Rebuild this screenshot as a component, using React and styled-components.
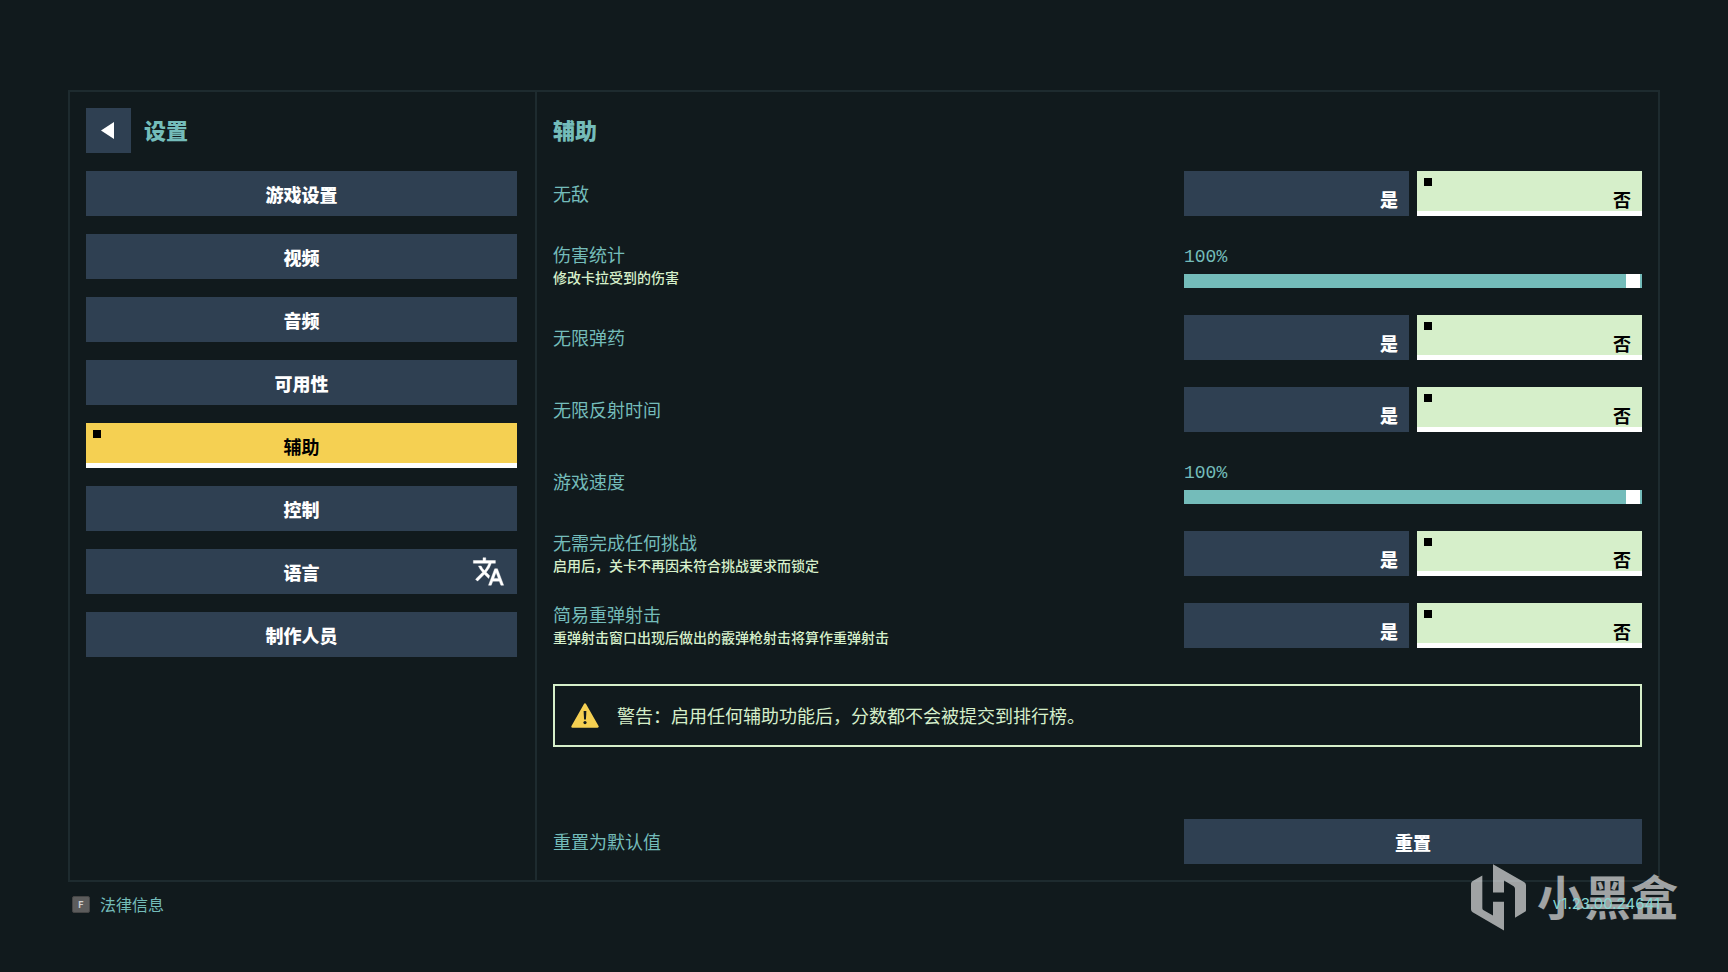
import React, { useState } from "react";
import styled, { createGlobalStyle, css, ThemeProvider } from "styled-components";

const theme = {
  bg: "#111a1d",
  line: "#1e2b2f",
  slate: "#2f4052",
  teal: "#74bcba",
  mint: "#d6efca",
  yellow: "#f5d052",
  white: "#ffffff",
  black: "#000000",
};

const GlobalStyle = createGlobalStyle`
  *, *::before, *::after { box-sizing: border-box; }
  body {
    margin: 0;
    background: ${theme.bg};
    color: ${theme.teal};
    font-family: "Noto Sans CJK SC", "Noto Sans", sans-serif;
    font-size: 18px;
    line-height: 24px;
  }
  button, input { font: inherit; margin: 0; }
`;

const Page = styled.div`
  position: relative;
  min-height: 100vh;
  display: flex;
  flex-direction: column;
  padding: 90px 68px 0;
`;

const Panel = styled.main`
  flex: 1;
  display: grid;
  grid-template-columns: minmax(240px, 467px) minmax(0, 1fr);
  border: 2px solid ${(p) => p.theme.line};
`;

const Sidebar = styled.aside`
  display: flex;
  flex-direction: column;
  gap: 18px;
  padding: 16px 18px 16px 16px;
  border-right: 2px solid ${(p) => p.theme.line};
`;

const Content = styled.section`
  display: flex;
  flex-direction: column;
  gap: 18px;
  padding: 16px;
`;

const Header = styled.header`
  display: flex;
  align-items: center;
  gap: 13px;
  height: 45px;
`;

const Title = styled.h1`
  margin: 0;
  padding-bottom: 4px;
  font-size: 22px;
  line-height: 32px;
  font-weight: 900;
`;

const buttonBase = css`
  border: 0;
  padding: 0;
  height: 45px;
  background: ${(p) => p.theme.slate};
  color: ${(p) => p.theme.white};
  font-weight: 900;
  cursor: pointer;
`;

const BackButton = styled.button`
  ${buttonBase}
  width: 45px;
  display: grid;
  place-items: center;
`;

const NavList = styled.nav`
  display: flex;
  flex-direction: column;
  gap: 18px;
`;

const NavButton = styled.button`
  ${buttonBase}
  width: 100%;
  display: grid;
  grid-template-columns: 1fr auto 1fr;
  align-items: center;
  padding: 0 7px;
  ${(p) =>
    p.$active &&
    css`
      background: ${p.theme.yellow};
      color: ${p.theme.black};
      font-weight: 700;
      box-shadow: inset 0 -5px ${p.theme.white};
    `}
`;

const Marker = styled.span`
  align-self: start;
  width: 8px;
  height: 8px;
  margin-top: 7px;
  background: ${(p) => (p.$on ? p.theme.black : "transparent")};
`;

const NavIcon = styled.span`
  display: flex;
  justify-self: end;
  padding-right: 5px;
`;

const Rows = styled.div`
  display: flex;
  flex-direction: column;
  gap: 27px;
`;

const Row = styled.div`
  display: grid;
  grid-template-columns: minmax(0, 1fr) minmax(200px, 458px);
  align-items: center;
  min-height: 45px;
`;

const RowText = styled.div`
  display: flex;
  flex-direction: column;
`;

const RowLabel = styled.span`
  padding-bottom: 2px;
  line-height: 22px;
`;

const RowHint = styled.span`
  color: ${(p) => p.theme.mint};
  font-size: 14px;
  line-height: 21px;
  font-weight: 500;
`;

const ToggleGroup = styled.div`
  display: grid;
  grid-template-columns: 1fr 1fr;
  gap: 8px;
`;

const ToggleOption = styled.label`
  display: flex;
  justify-content: space-between;
  height: 45px;
  padding: 7px 11px 0 7px;
  background: ${(p) => (p.$on ? p.theme.mint : p.theme.slate)};
  color: ${(p) => (p.$on ? p.theme.black : p.theme.white)};
  font-weight: ${(p) => (p.$on ? 700 : 900)};
  box-shadow: ${(p) => (p.$on ? `inset 0 -5px ${p.theme.white}` : "none")};
  cursor: pointer;
`;

const ToggleRadio = styled.input`
  appearance: none;
  width: 8px;
  height: 8px;
  background: transparent;
  &:checked { background: ${(p) => p.theme.black}; }
`;

const ToggleText = styled.span`
  height: 38px;
  line-height: 42px;
`;

const SliderBox = styled.div`
  display: flex;
  flex-direction: column;
  justify-content: space-between;
  height: 45px;
`;

const SliderValue = styled.output`
  padding-top: 2px;
  font-family: "Liberation Mono", monospace;
  line-height: 24px;
`;

const Slider = styled.input`
  appearance: none;
  display: block;
  width: 100%;
  height: 14px;
  padding: 0 2px;
  background: ${(p) => p.theme.teal};
  cursor: pointer;
  &::-webkit-slider-thumb {
    appearance: none;
    width: 14px;
    height: 14px;
    background: ${(p) => p.theme.white};
  }
`;

const Warning = styled.p`
  display: flex;
  align-items: center;
  gap: 18px;
  min-height: 63px;
  margin: 18px 0 0;
  padding: 0 16px;
  border: 2px solid ${(p) => p.theme.mint};
  color: ${(p) => p.theme.mint};
`;

const ResetRow = styled(Row)`
  margin-top: auto;
`;

const ResetButton = styled.button`
  ${buttonBase}
  width: 100%;
`;

const Footer = styled.footer`
  display: flex;
  justify-content: space-between;
  align-items: flex-start;
  height: 90px;
  padding-top: 10px;
`;

const Legal = styled.a`
  display: flex;
  align-items: center;
  gap: 10px;
  padding-left: 4px;
  color: ${(p) => p.theme.teal};
  font-size: 16px;
  text-decoration: none;
`;

const Key = styled.kbd`
  width: 18px;
  height: 17px;
  border: 1px solid #454545;
  border-radius: 2px;
  background: #5c5c5c;
  color: #d0d0d0;
  font: 700 9px/15px Inter, sans-serif;
  text-align: center;
`;

const Version = styled.span`
  position: relative;
  z-index: 1;
  color: #86d6d2;
  font-family: Inter, sans-serif;
  font-size: 15px;
`;

const Watermark = styled.div`
  position: absolute;
  right: 50px;
  bottom: 41px;
  display: flex;
  align-items: flex-start;
  gap: 11px;
  color: ${(p) => p.theme.white};
  font-size: 47px;
  line-height: 62px;
  font-weight: 700;
  opacity: 0.6;
  pointer-events: none;
`;

const TranslateIcon = () => (
  <svg width="33" height="33" viewBox="0 0 24 24" fill="currentColor" aria-hidden="true">
    <path d="M12.87 15.07l-2.54-2.51.03-.03A17.52 17.52 0 0014.07 6H17V4h-7V2H8v2H1v1.99h11.17C11.5 7.92 10.44 9.75 9 11.35 8.07 10.32 7.3 9.19 6.69 8h-2c.73 1.63 1.73 3.17 2.98 4.56l-5.09 5.02L4 19l5-5 3.11 3.11.76-2.04zM18.5 10h-2L12 22h2l1.12-3h4.75L21 22h2l-4.5-12zm-2.62 7l1.62-4.33L19.12 17h-3.24z" stroke="currentColor" strokeWidth="0.3" />
  </svg>
);

const BackIcon = () => (
  <svg width="15" height="17" viewBox="0 0 15 17" fill="currentColor" aria-hidden="true">
    <path d="M13 0v17L0 8.5z" />
  </svg>
);

const WarningIcon = () => (
  <svg width="28" height="25" viewBox="0 0 28 25" aria-hidden="true">
    <path d="M14 1.5L26.5 23.5H1.5z" fill={theme.yellow} stroke={theme.yellow} strokeWidth="2.4" strokeLinejoin="round" />
    <path d="M12.6 8h2.8l-.5 8.4h-1.8z" fill={theme.bg} />
    <circle cx="14" cy="19.6" r="1.6" fill={theme.bg} />
  </svg>
);

const HeyboxLogo = () => (
  <svg width="55" height="67" viewBox="48 44 165 200" fill="currentColor" aria-hidden="true">
    <path d="M82 78v98q0 4 4 6l28 16v-41h33v86l-94-55q-5-3-5-9v-76q0-5 4-8z" />
    <path d="M114 44l94 54q5 3 5 9v75q0 3-3 5l-30 18v-87q0-5-4-8l-29-17v36h-33z" />
  </svg>
);

const sections = ["游戏设置", "视频", "音频", "可用性", "辅助", "控制", "语言", "制作人员"];

const options = [
  { id: "invincible", label: "无敌", kind: "toggle" },
  { id: "damage", label: "伤害统计", hint: "修改卡拉受到的伤害", kind: "slider" },
  { id: "ammo", label: "无限弹药", kind: "toggle" },
  { id: "reflex", label: "无限反射时间", kind: "toggle" },
  { id: "speed", label: "游戏速度", kind: "slider" },
  { id: "challenges", label: "无需完成任何挑战", hint: "启用后，关卡不再因未符合挑战要求而锁定", kind: "toggle" },
  { id: "ricochet", label: "简易重弹射击", hint: "重弹射击窗口出现后做出的霰弹枪射击将算作重弹射击", kind: "toggle" },
];

function Toggle({ id }) {
  const [value, setValue] = useState("否");
  return (
    <ToggleGroup role="radiogroup" aria-labelledby={`${id}-label`}>
      {["是", "否"].map((text) => (
        <ToggleOption key={text} $on={value === text}>
          <ToggleRadio type="radio" name={id} checked={value === text} onChange={() => setValue(text)} />
          <ToggleText>{text}</ToggleText>
        </ToggleOption>
      ))}
    </ToggleGroup>
  );
}

function PercentSlider({ id }) {
  const [value, setValue] = useState(100);
  return (
    <SliderBox>
      <SliderValue htmlFor={id}>{value}%</SliderValue>
      <Slider
        id={id}
        type="range"
        min="0"
        max="100"
        value={value}
        aria-labelledby={`${id}-label`}
        onChange={(e) => setValue(Number(e.target.value))}
      />
    </SliderBox>
  );
}

export default function App() {
  const [active, setActive] = useState("辅助");
  return (
    <ThemeProvider theme={theme}>
      <GlobalStyle />
      <Page>
        <Panel>
          <Sidebar>
            <Header>
              <BackButton type="button" aria-label="返回">
                <BackIcon />
              </BackButton>
              <Title>设置</Title>
            </Header>
            <NavList>
              {sections.map((name) => (
                <NavButton key={name} type="button" $active={name === active} onClick={() => setActive(name)}>
                  <Marker $on={name === active} />
                  <span>{name}</span>
                  <NavIcon>{name === "语言" && <TranslateIcon />}</NavIcon>
                </NavButton>
              ))}
            </NavList>
          </Sidebar>
          <Content>
            <Header>
              <Title as="h2">辅助</Title>
            </Header>
            <Rows>
              {options.map(({ id, label, hint, kind }) => (
                <Row key={id}>
                  <RowText>
                    <RowLabel id={`${id}-label`}>{label}</RowLabel>
                    {hint && <RowHint>{hint}</RowHint>}
                  </RowText>
                  {kind === "toggle" ? <Toggle id={id} /> : <PercentSlider id={id} />}
                </Row>
              ))}
            </Rows>
            <Warning>
              <WarningIcon />
              <RowLabel>警告：启用任何辅助功能后，分数都不会被提交到排行榜。</RowLabel>
            </Warning>
            <ResetRow>
              <RowLabel id="reset-label">重置为默认值</RowLabel>
              <ResetButton type="button" aria-describedby="reset-label">重置</ResetButton>
            </ResetRow>
          </Content>
        </Panel>
        <Footer>
          <Legal href="#legal">
            <Key>F</Key>
            <span>法律信息</span>
          </Legal>
          <Version>v1.23.00.24641</Version>
        </Footer>
        <Watermark>
          <HeyboxLogo />
          <span>小黑盒</span>
        </Watermark>
      </Page>
    </ThemeProvider>
  );
}
